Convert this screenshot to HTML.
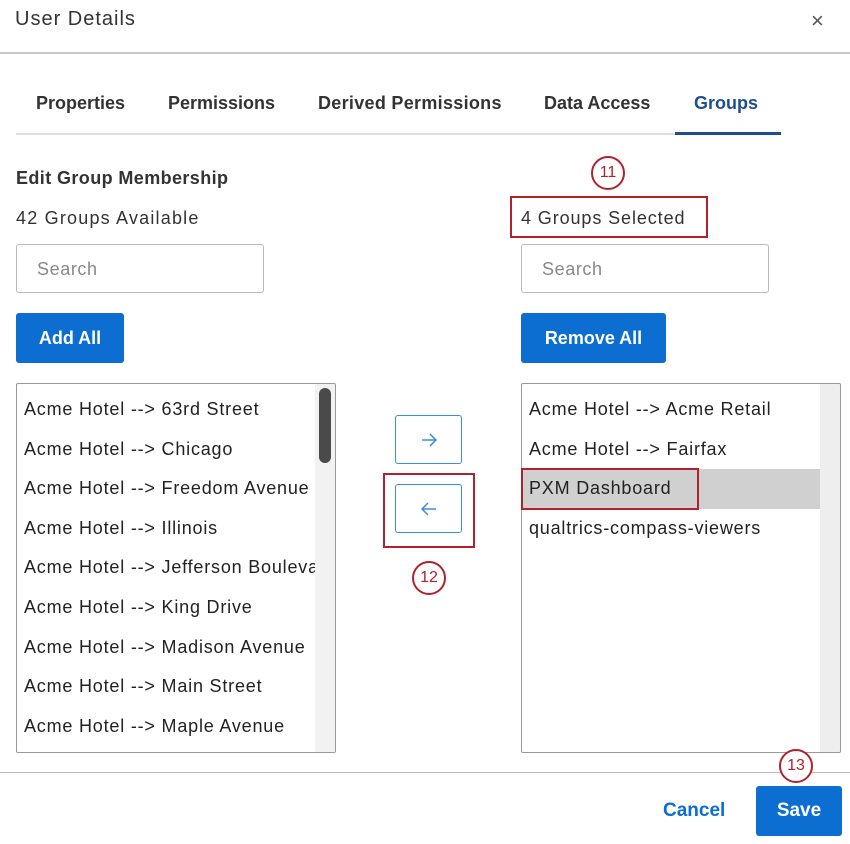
<!DOCTYPE html>
<html><head><style>
*{box-sizing:border-box;margin:0;padding:0}
body{width:850px;height:844px;background:#fff;font-family:"Liberation Sans",sans-serif;color:#222;position:relative;overflow:hidden}
.a{position:absolute;white-space:nowrap}
.tab{position:absolute;top:93px;font-size:18px;font-weight:bold;color:#333}
.btn{position:absolute;background:#0b6ed0;color:#fff;font-weight:bold;font-size:18px;border-radius:3px;display:flex;align-items:center;justify-content:center}
.inp{position:absolute;border:1px solid #bbb;border-radius:3px;height:49px;width:248px;font-size:18px;color:#888;padding:14px 20px;letter-spacing:0.6px}
.list{position:absolute;border:1px solid #999;border-radius:2px;top:383px;height:370px;width:320px;overflow:hidden}
.list div{font-size:18px;height:39.6px;line-height:39.6px;padding-left:7px;color:#222;letter-spacing:0.8px;white-space:nowrap}
.circ{position:absolute;width:34px;height:34px;border:2px solid #b0232e;border-radius:50%;color:#b0232e;font-size:16px;text-align:center;line-height:30px}
.arr{position:absolute;left:395px;width:67px;height:49px;border:1px solid #3b8de0;border-radius:3px}
.arr svg{position:absolute;left:24px;top:16px}
</style></head><body>
<div class="a" style="left:15px;top:8px;font-size:20px;color:#333;letter-spacing:1px">User Details</div>
<div class="a" style="left:811px;top:8px;font-size:22px;color:#555">×</div>
<div class="a" style="left:0;top:52px;width:850px;height:2px;background:#c8c8c8"></div>
<div class="tab" style="left:36px">Properties</div>
<div class="tab" style="left:168px">Permissions</div>
<div class="tab" style="left:318px;letter-spacing:0.3px">Derived Permissions</div>
<div class="tab" style="left:544px">Data Access</div>
<div class="tab" style="left:694px;color:#1d4f8c">Groups</div>
<div class="a" style="left:16px;top:133px;width:660px;height:2px;background:#ddd"></div>
<div class="a" style="left:675px;top:132px;width:106px;height:3px;background:#1d4f8c"></div>
<div class="a" style="left:16px;top:168px;font-size:18px;font-weight:bold;color:#333;letter-spacing:0.4px">Edit Group Membership</div>
<div class="a" style="left:16px;top:208px;font-size:18px;color:#333;letter-spacing:1.2px">42 Groups Available</div>
<div class="circ" style="left:591px;top:156px">11</div>
<div class="a" style="left:510px;top:196px;width:198px;height:42px;border:2px solid #b0232e"></div>
<div class="a" style="left:521px;top:208px;font-size:18px;color:#333;letter-spacing:0.9px">4 Groups Selected</div>
<div class="inp" style="left:16px;top:244px">Search</div>
<div class="inp" style="left:521px;top:244px">Search</div>
<div class="btn" style="left:16px;top:313px;width:108px;height:50px">Add All</div>
<div class="btn" style="left:521px;top:313px;width:145px;height:50px">Remove All</div>
<div class="list" style="left:16px;padding-top:6px">
<div>Acme Hotel --&gt; 63rd Street</div><div>Acme Hotel --&gt; Chicago</div><div>Acme Hotel --&gt; Freedom Avenue</div><div>Acme Hotel --&gt; Illinois</div><div>Acme Hotel --&gt; Jefferson Bouleva</div><div>Acme Hotel --&gt; King Drive</div><div>Acme Hotel --&gt; Madison Avenue</div><div>Acme Hotel --&gt; Main Street</div><div>Acme Hotel --&gt; Maple Avenue</div>
<span style="position:absolute;right:0;top:0;width:20px;height:370px;background:#f2f2f2"></span>
<span style="position:absolute;right:4px;top:4px;width:12px;height:75px;background:#4a4a4a;border-radius:6px"></span>
</div>
<div class="list" style="left:521px;padding-top:6px">
<div>Acme Hotel --&gt; Acme Retail</div><div>Acme Hotel --&gt; Fairfax</div><div style="background:#d0d0d0;width:298px">PXM Dashboard</div><div>qualtrics-compass-viewers</div>
<span style="position:absolute;right:0;top:0;width:20px;height:370px;background:#eee"></span>
</div>
<div class="a" style="left:521px;top:468px;width:178px;height:42px;border:2px solid #b0232e"></div>
<div class="arr" style="top:415px"><svg width="18" height="16" viewBox="0 0 18 16"><path d="M2 8H16M10 2L16 8L10 14" fill="none" stroke="#3b8de0" stroke-width="1.5"/></svg></div>
<div class="arr" style="top:484px"><svg width="18" height="16" viewBox="0 0 18 16"><path d="M16 8H2M8 2L2 8L8 14" fill="none" stroke="#3b8de0" stroke-width="1.5"/></svg></div>
<div class="a" style="left:383px;top:473px;width:92px;height:75px;border:2px solid #b0232e"></div>
<div class="circ" style="left:412px;top:561px">12</div>
<div class="a" style="left:0;top:772px;width:850px;height:1px;background:#bbb"></div>
<div class="circ" style="left:779px;top:749px;background:#fff">13</div>
<div class="a" style="left:663px;top:800px;font-size:19px;font-weight:bold;color:#0b6ed0">Cancel</div>
<div class="btn" style="left:756px;top:786px;width:86px;height:50px;font-size:19px">Save</div>
</body></html>
